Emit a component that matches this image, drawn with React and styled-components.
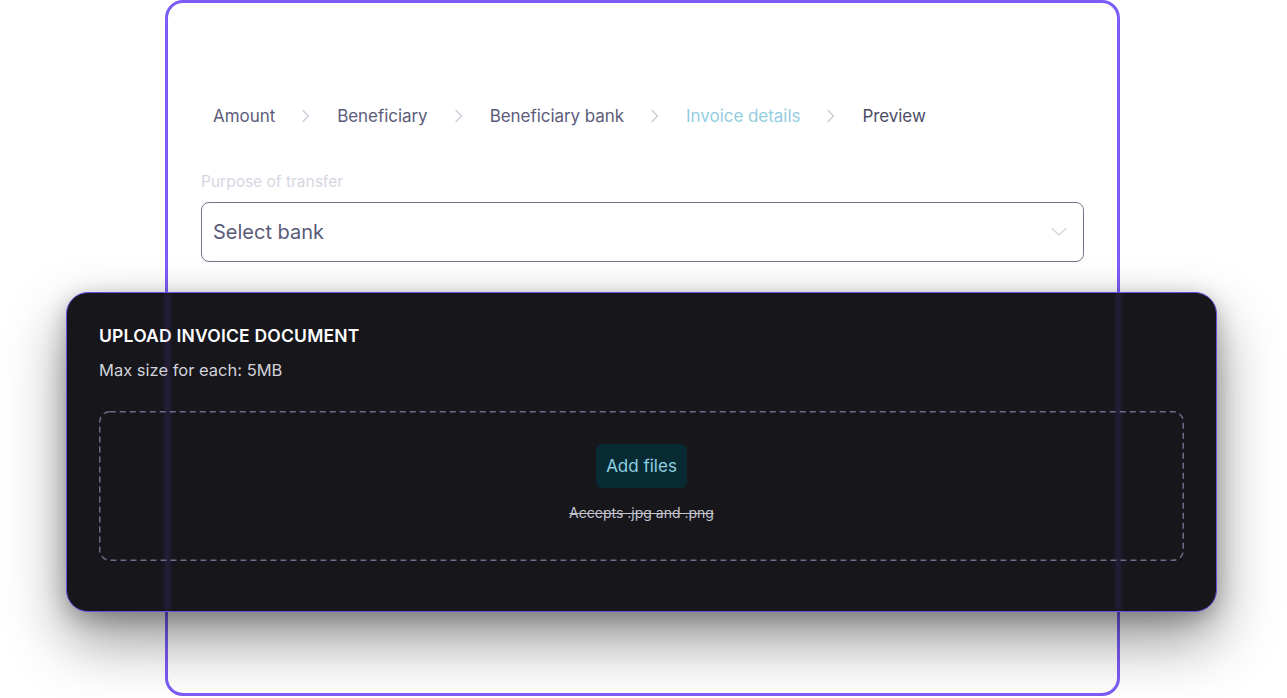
import React from 'react';
import styled, { createGlobalStyle } from 'styled-components';

const GlobalStyle = createGlobalStyle`
  html, body {
    margin: 0;
    padding: 0;
    background: #ffffff;
    font-family: Inter, 'Liberation Sans', sans-serif;
    overflow: hidden;
  }
`;

const Stage = styled.div`
  position: relative;
  width: 1287px;
  height: 698px;
`;

const Card = styled.div`
  box-sizing: border-box;
  margin-left: 165px;
  width: 955px;
  height: 696px;
  border: 3px solid #7b5cf6;
  border-radius: 18px;
  background: #ffffff;
  padding: 92px 33px 0 33px;
`;

const Steps = styled.nav`
  display: flex;
  align-items: center;
  gap: 26px;
  padding-left: 12px;
  height: 42px;
`;

const Step = styled.span`
  font-size: 17px;
  color: ${({ active, last }) => (active ? '#93cddf' : last ? '#4c4c66' : '#5c5c7a')};
  letter-spacing: -0.05px;
`;

const Chevron = styled.svg`
  width: 10px;
  height: 14px;
  flex: none;
`;

const Field = styled.div`
  margin-top: 35px;
`;

const Label = styled.div`
  font-size: 15.5px;
  color: #d6d6e2;
  margin-bottom: 11px;
`;

const Select = styled.div`
  box-sizing: border-box;
  height: 60px;
  border: 1.5px solid #74748f;
  border-radius: 8px;
  display: flex;
  align-items: center;
  justify-content: space-between;
  padding: 0 16px 0 11px;
  font-size: 20px;
  color: #5a5a78;
`;

const Panel = styled.div`
  position: absolute;
  left: 66px;
  top: 292px;
  box-sizing: border-box;
  width: 1151px;
  height: 320px;
  background: #16161b;
  border: 1.5px solid #6d4fe0;
  border-radius: 22px;
  box-shadow: 0 28px 60px rgba(0, 0, 0, 0.42), 0 6px 22px rgba(0, 0, 0, 0.25);
  padding: 32px 32px 0 32px;
  overflow: hidden;
`;

const Glow = styled.div`
  position: absolute;
  top: 0;
  bottom: 0;
  left: ${({ x }) => x}px;
  width: 5px;
  background: rgba(120, 96, 255, 0.16);
  filter: blur(2px);
  pointer-events: none;
`;

const Title = styled.h2`
  margin: 0;
  font-size: 17.5px;
  font-weight: 600;
  color: #ffffff;
  letter-spacing: 0.2px;
`;

const Hint = styled.p`
  margin: 14px 0 0 0;
  font-size: 16.5px;
  color: #d2d2da;
`;

const Drop = styled.div`
  position: relative;
  box-sizing: border-box;
  margin-top: 31px;
  height: 150px;
  display: flex;
  flex-direction: column;
  align-items: center;
  padding-top: 33px;
`;

const DashFrame = styled.svg`
  position: absolute;
  inset: 0;
  width: 100%;
  height: 100%;
  overflow: visible;
  pointer-events: none;
`;

const AddButton = styled.button`
  height: 44px;
  padding: 0 10px;
  border: none;
  border-radius: 6px;
  background: #082a33;
  color: #8ed0e2;
  font-family: inherit;
  font-size: 17px;
  cursor: pointer;
`;

const Accepts = styled.span`
  margin-top: 16px;
  font-size: 14px;
  color: #c4c4cf;
  text-decoration: line-through;
`;

const steps = ['Amount', 'Beneficiary', 'Beneficiary bank', 'Invoice details', 'Preview'];

const StepChevron = () => (
  <Chevron viewBox="0 0 10 14" fill="none">
    <path d="M2 1.5 L7.5 7 L2 12.5" stroke="#c9c9d6" strokeWidth="1.2" strokeLinecap="round" strokeLinejoin="round" />
  </Chevron>
);

const App = () => {
  return (
    <Stage>
      <GlobalStyle />
      <Card>
        <Steps>
          {steps.map((s, i) => (
            <React.Fragment key={s}>
              <Step active={s === 'Invoice details'} last={i === steps.length - 1}>
                {s}
              </Step>
              {i < steps.length - 1 && <StepChevron />}
            </React.Fragment>
          ))}
        </Steps>
        <Field>
          <Label>Purpose of transfer</Label>
          <Select>
            Select bank
            <svg width="16" height="10" viewBox="0 0 16 10" fill="none">
              <path d="M1 1.5 L8 8 L15 1.5" stroke="#d4d4de" strokeWidth="1.3" strokeLinecap="round" strokeLinejoin="round" />
            </svg>
          </Select>
        </Field>
      </Card>
      <Panel>
        <Glow x={98} />
        <Glow x={1049} />
        <Title>UPLOAD INVOICE DOCUMENT</Title>
        <Hint>Max size for each: 5MB</Hint>
        <Drop>
          <DashFrame>
            <rect x="0.75" y="0.75" width="calc(100% - 1.5px)" height="calc(100% - 1.5px)" rx="10" fill="none" stroke="#6c6c88" strokeWidth="1.5" strokeDasharray="6 4" />
          </DashFrame>
          <AddButton>Add files</AddButton>
          <Accepts>Accepts .jpg and .png</Accepts>
        </Drop>
      </Panel>
    </Stage>
  );
};

export default App;
